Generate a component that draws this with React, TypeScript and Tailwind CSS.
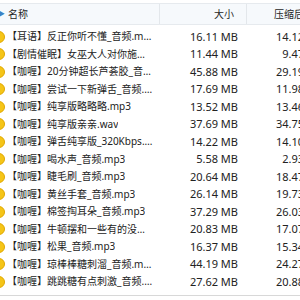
const rows = [
  { name: "【耳语】反正你听不懂_音频.mp3", size: "16.11 MB", packed: "14.12 MB" },
  { name: "【剧情催眠】女巫大人对你施展的魔法.mp3", size: "11.44 MB", packed: "9.47 MB" },
  { name: "【咖喱】20分钟超长芦荟胶_音频.mp3", size: "45.88 MB", packed: "29.19 MB" },
  { name: "【咖喱】尝试一下新弹舌_音频.mp3", size: "17.69 MB", packed: "11.98 MB" },
  { name: "【咖喱】纯享版略略略.mp3", size: "13.52 MB", packed: "13.46 MB" },
  { name: "【咖喱】纯享版亲亲.wav", size: "37.69 MB", packed: "34.75 MB" },
  { name: "【咖喱】弹舌纯享版_320Kbps.mp3", size: "14.22 MB", packed: "14.10 MB" },
  { name: "【咖喱】喝水声_音频.mp3", size: "5.58 MB", packed: "2.93 MB" },
  { name: "【咖喱】睫毛刷_音频.mp3", size: "20.64 MB", packed: "18.47 MB" },
  { name: "【咖喱】黄丝手套_音频.mp3", size: "26.14 MB", packed: "19.73 MB" },
  { name: "【咖喱】棉签掏耳朵_音频.mp3", size: "37.29 MB", packed: "26.03 MB" },
  { name: "【咖喱】牛顿摆和一些有的没的_音频.mp3", size: "20.83 MB", packed: "17.07 MB" },
  { name: "【咖喱】松果_音频.mp3", size: "16.37 MB", packed: "15.34 MB" },
  { name: "【咖喱】琼棒棒糖刺溜_音频.mp3", size: "44.19 MB", packed: "24.27 MB" },
  { name: "【咖喱】跳跳糖有点刺激_音频.mp3", size: "27.62 MB", packed: "20.88 MB" },
];

const font = { fontFamily: '"Noto Sans", "Noto Sans CJK SC", sans-serif' };

function FileIcon() {
  return (
    <div className="w-[7px] h-[17px] shrink-0 flex items-center overflow-hidden">
      <div className="w-[12px] h-[12px] -ml-[7px] rounded-full bg-[#f5c518] border border-[#e0a800] shrink-0" />
    </div>
  );
}

export default function App() {
  return (
    <div
      className="w-[300px] h-[300px] bg-white overflow-hidden text-[#222222] pt-[3px]"
      style={font}
    >
      {/* Header */}
      <div className="flex h-[22px] bg-[#f6f9fc] border-t border-b border-[#e6eaee] text-[#262626] text-[10px]">
        <div className="w-[160px] shrink-0 flex items-center border-r border-[#e3e7eb]">
          <span className="text-[#3b82c4] text-[7px] w-[10px] -ml-[2px]">▶</span>
          <span>名称</span>
        </div>
        <div className="w-[87px] shrink-0 flex items-center justify-end pr-[12px] border-r border-[#e3e7eb]">
          大小
        </div>
        <div className="flex-1 flex items-center pl-[27px] whitespace-nowrap">压缩后大小</div>
      </div>

      {/* Rows */}
      <div className="pt-[3px] pb-[4px] border-b border-[#d8d8d8]">
        {rows.map((r) => (
          <div key={r.name} className="flex h-[17.5px] items-center">
            <div className="w-[160px] shrink-0 flex items-center pr-[7px] text-[10px]">
              <FileIcon />
              <span className="truncate">{r.name}</span>
            </div>
            <div className="w-[87px] shrink-0 text-right pr-[9px] text-[11px]">{r.size}</div>
            <div className="flex-1 text-right whitespace-nowrap -mr-[24px] text-[11px]">{r.packed}</div>
          </div>
        ))}
      </div>
    </div>
  );
}
